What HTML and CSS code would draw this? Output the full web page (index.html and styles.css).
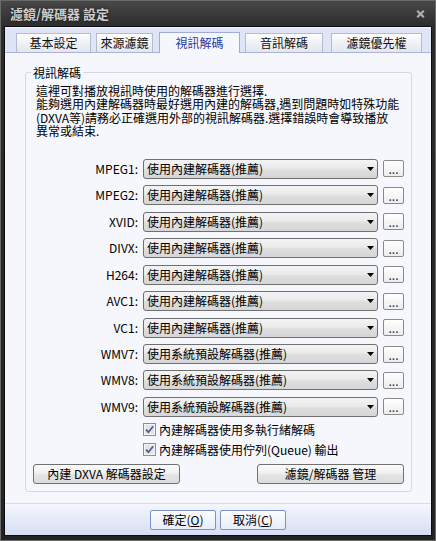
FILE: index.html
```html
<!DOCTYPE html>
<html lang="zh-Hant">
<head>
<meta charset="utf-8">
<title>濾鏡/解碼器 設定</title>
<link rel="stylesheet" href="styles.css">
</head>
<body>
<div class="window">
  <div class="titlebar">
    <span class="title">濾鏡/解碼器 設定</span>
    <svg class="close" width="9" height="8" viewBox="0 0 9 8"><path d="M1.2 0.8L7.8 7.2M7.8 0.8L1.2 7.2" stroke="#b2b2b2" stroke-width="2.1"/></svg>
  </div>
  <div class="client">
    <div class="tabs">
      <div class="tab">基本設定</div>
      <div class="tab">來源濾鏡</div>
      <div class="tab active">視訊解碼</div>
      <div class="tab">音訊解碼</div>
      <div class="tab">濾鏡優先權</div>
    </div>
    <div class="panel">
      <fieldset class="group">
        <legend>視訊解碼</legend>
        <div class="inner">
          <p class="desc">這裡可對播放視訊時使用的解碼器進行選擇.<br>能夠選用內建解碼器時最好選用內建的解碼器,遇到問題時如特殊功能<br>(DXVA等)請務必正確選用外部的視訊解碼器.選擇錯誤時會導致播放<br>異常或結束.</p>
          <div class="rows">
            <div class="row"><span class="lbl">MPEG1:</span><div class="combo"><span>使用內建解碼器(推薦)</span><svg width="7" height="4" viewBox="0 0 7 4"><path d="M0 0H7L3.5 4Z" fill="#000"/></svg></div><button class="more">...</button></div>
            <div class="row"><span class="lbl">MPEG2:</span><div class="combo"><span>使用內建解碼器(推薦)</span><svg width="7" height="4" viewBox="0 0 7 4"><path d="M0 0H7L3.5 4Z" fill="#000"/></svg></div><button class="more">...</button></div>
            <div class="row"><span class="lbl">XVID:</span><div class="combo"><span>使用內建解碼器(推薦)</span><svg width="7" height="4" viewBox="0 0 7 4"><path d="M0 0H7L3.5 4Z" fill="#000"/></svg></div><button class="more">...</button></div>
            <div class="row"><span class="lbl">DIVX:</span><div class="combo"><span>使用內建解碼器(推薦)</span><svg width="7" height="4" viewBox="0 0 7 4"><path d="M0 0H7L3.5 4Z" fill="#000"/></svg></div><button class="more">...</button></div>
            <div class="row"><span class="lbl">H264:</span><div class="combo"><span>使用內建解碼器(推薦)</span><svg width="7" height="4" viewBox="0 0 7 4"><path d="M0 0H7L3.5 4Z" fill="#000"/></svg></div><button class="more">...</button></div>
            <div class="row"><span class="lbl">AVC1:</span><div class="combo"><span>使用內建解碼器(推薦)</span><svg width="7" height="4" viewBox="0 0 7 4"><path d="M0 0H7L3.5 4Z" fill="#000"/></svg></div><button class="more">...</button></div>
            <div class="row"><span class="lbl">VC1:</span><div class="combo"><span>使用內建解碼器(推薦)</span><svg width="7" height="4" viewBox="0 0 7 4"><path d="M0 0H7L3.5 4Z" fill="#000"/></svg></div><button class="more">...</button></div>
            <div class="row"><span class="lbl">WMV7:</span><div class="combo"><span>使用系統預設解碼器(推薦)</span><svg width="7" height="4" viewBox="0 0 7 4"><path d="M0 0H7L3.5 4Z" fill="#000"/></svg></div><button class="more">...</button></div>
            <div class="row"><span class="lbl">WMV8:</span><div class="combo"><span>使用系統預設解碼器(推薦)</span><svg width="7" height="4" viewBox="0 0 7 4"><path d="M0 0H7L3.5 4Z" fill="#000"/></svg></div><button class="more">...</button></div>
            <div class="row"><span class="lbl">WMV9:</span><div class="combo"><span>使用系統預設解碼器(推薦)</span><svg width="7" height="4" viewBox="0 0 7 4"><path d="M0 0H7L3.5 4Z" fill="#000"/></svg></div><button class="more">...</button></div>
          </div>
          <div class="checks">
            <div class="check"><svg class="cb" width="13" height="13" viewBox="0 0 13 13"><rect x="0.5" y="0.5" width="12" height="12" fill="#f4f4f4" stroke="#8e8f8f"/><rect x="2" y="2" width="9" height="9" fill="#e4e4e4"/><path d="M3 6.6L5.4 9.2L10.2 3.3" fill="none" stroke="#4c5f93" stroke-width="1.8"/></svg><span>內建解碼器使用多執行緒解碼</span></div>
            <div class="check"><svg class="cb" width="13" height="13" viewBox="0 0 13 13"><rect x="0.5" y="0.5" width="12" height="12" fill="#f4f4f4" stroke="#8e8f8f"/><rect x="2" y="2" width="9" height="9" fill="#e4e4e4"/><path d="M3 6.6L5.4 9.2L10.2 3.3" fill="none" stroke="#4c5f93" stroke-width="1.8"/></svg><span>內建解碼器使用佇列(Queue) 輸出</span></div>
          </div>
          <div class="actions">
            <button class="btn">內建 DXVA 解碼器設定</button>
            <button class="btn">濾鏡/解碼器 管理</button>
          </div>
        </div>
      </fieldset>
    </div>
    <div class="footer">
      <button class="fbtn">確定(<u>O</u>)</button>
      <button class="fbtn">取消(<u>C</u>)</button>
    </div>
  </div>
</div>
</body>
</html>
```
FILE: styles.css
```css
* { box-sizing: border-box; }
html, body { margin: 0; padding: 0; }
body {
  width: 436px;
  height: 541px;
  overflow: hidden;
  background: #1f1f1f;
  font-family: "Noto Sans CJK TC", "Noto Sans", sans-serif;
  font-size: 12px;
  color: #000;
}
.window {
  width: 436px;
  height: 541px;
  border: 1px solid #6a6a6a;
  padding: 0 3px 4px;
  background: linear-gradient(#484848 0px, #2c2c2c 26px, #232323 100%);
  display: flex;
  flex-direction: column;
}
.titlebar {
  height: 25px;
  display: flex;
  align-items: center;
  justify-content: space-between;
  padding: 1px 7px 0 6px;
}
.title {
  color: #cdcdcd;
  font-size: 13px;
  font-weight: bold;
  line-height: 16px;
  text-shadow: 0 0 3px rgba(0, 0, 0, 0.7);
}
.close { display: block; }
.client {
  height: 510px;
  border: 1px solid #0d0d0d;
  display: flex;
  flex-direction: column;
  background: #f6f7fd;
}
.tabs {
  height: 26px;
  display: flex;
  align-items: flex-end;
  padding-left: 11px;
  background: #dfe4f6;
  border-bottom: 1px solid #a9b4d6;
  box-shadow: inset 0 1px #f4f6fd;
}
.tab {
  height: 19px;
  display: flex;
  align-items: center;
  justify-content: center;
  border: 1px solid #b3bbcf;
  border-bottom: none;
  background: linear-gradient(#fdfdfe, #eef0f5 55%, #e3e6ef);
  color: #111;
  line-height: 14px;
}
.tab:nth-child(1) { width: 75px; }
.tab:nth-child(2) { width: 57px; margin-left: 5px; }
.tab.active {
  width: 81px;
  margin-left: 6px;
  height: 21px;
  margin-bottom: -1px;
  background: #f6f7fd;
  border-color: #9eacd6;
  color: #283a9c;
}
.tab:nth-child(4) { width: 78px; margin-left: 5px; }
.tab:nth-child(5) { width: 91px; margin-left: 8px; }

.panel {
  flex: 1;
  padding: 13px 19px 0 20px;
}
.group {
  margin: 0;
  padding: 0;
  min-width: 0;
  border: 1px solid #d3d9e4;
  border-radius: 3px;
}
.group legend {
  margin-left: 5px;
  padding: 0 2px;
  font-size: 12px;
  line-height: 13px;
}
.inner { padding: 0 7px 7px; }
.desc {
  margin: 5px 0 0;
  padding-left: 3px;
  line-height: 13.33px;
  white-space: nowrap;
}
.rows {
  margin-top: 21.67px;
  display: flex;
  flex-direction: column;
  gap: 6.44px;
}
.row {
  height: 20px;
  display: grid;
  grid-template-columns: 1fr 235px 21px;
  column-gap: 5px;
  align-items: center;
}
.lbl {
  text-align: right;
  line-height: 20px;
  white-space: nowrap;
}
.combo {
  height: 20px;
  border: 1px solid #707070;
  border-radius: 3px;
  background: linear-gradient(#f4f4f4, #eaeaea 45%, #dedede 55%, #d6d6d6);
  display: flex;
  align-items: center;
  justify-content: space-between;
  padding: 0 3px 0 3px;
  line-height: 16px;
  white-space: nowrap;
}
.combo svg { display: block; }
.more {
  width: 21px;
  height: 17px;
  margin: 0;
  padding: 0 0 2px;
  border: 1px solid #8a8a8a;
  border-radius: 2px;
  background: linear-gradient(#ffffff, #ededed);
  font-family: inherit;
  font-size: 12px;
  line-height: 10px;
  color: #1a2a60;
  display: flex;
  align-items: flex-end;
  justify-content: center;
}
.checks {
  margin-top: 3px;
  padding-left: 110px;
}
.check {
  height: 20px;
  display: flex;
  align-items: center;
  gap: 3px;
  line-height: 16px;
  white-space: nowrap;
}
.cb { display: block; flex: none; }
.actions {
  margin-top: 4px;
  display: flex;
  justify-content: space-between;
}
.btn {
  width: 147px;
  height: 20px;
  margin: 0;
  padding: 0;
  border: 1px solid #707070;
  border-radius: 3px;
  background: linear-gradient(#fbfbfb, #f0f0f0 45%, #e4e4e4 55%, #dcdcdc);
  font-family: inherit;
  font-size: 12px;
  line-height: 16px;
  color: #000;
}
.footer {
  height: 32px;
  border-top: 1px solid #d7dce9;
  background: linear-gradient(#f4f6fc, #d7def4);
  display: flex;
  justify-content: center;
  align-items: flex-start;
  gap: 4px;
  padding-top: 6px;
}
.fbtn {
  width: 66px;
  height: 20px;
  margin: 0;
  padding: 0;
  border: 1px solid #7d90c6;
  border-radius: 2px;
  background: linear-gradient(#fbfcff, #e9edf8);
  font-family: inherit;
  font-size: 12px;
  line-height: 16px;
  color: #000;
}
```
